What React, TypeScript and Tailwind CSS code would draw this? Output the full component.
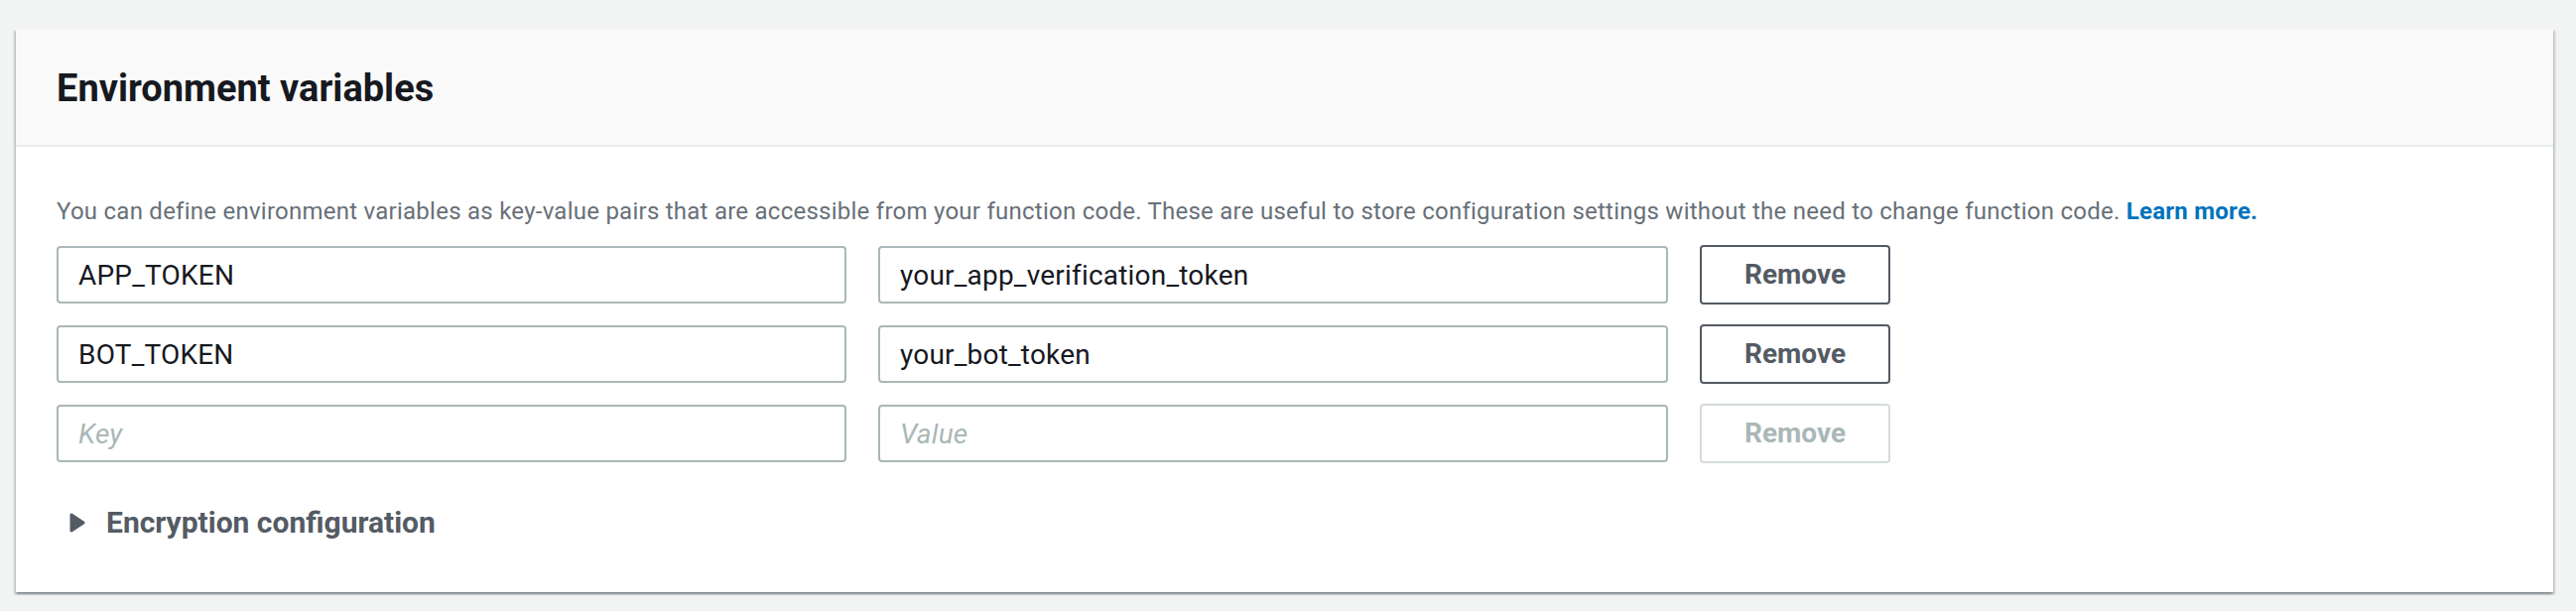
import React from "react";

const rows = [
  { key: "APP_TOKEN", value: "your_app_verification_token" },
  { key: "BOT_TOKEN", value: "your_bot_token" },
  { key: "", value: "" },
];

export default function App() {
  return (
    <div className="h-[616px] w-[2596px] bg-[#f2f3f3] pl-[16px] pr-[23px] pt-[29px] font-['Roboto',sans-serif]">
      <section className="h-[568px] bg-white shadow-[0_2px_2px_0_rgba(0,28,36,0.3),2px_2px_2px_0_rgba(0,28,36,0.15),-2px_2px_2px_0_rgba(0,28,36,0.15)]">
        <header className="flex h-[119px] items-center border-b-2 border-[#eaeded] bg-[#fafafa] px-[41px]">
          <h2 className="pt-[2px] text-[38px] font-bold leading-[44px] text-[#16191f]">Environment variables</h2>
        </header>

        <div className="px-[41px] pt-[49px]">
          <p className="text-[24px] leading-[32px] tracking-[0.25px] text-[#687078]">
            You can define environment variables as key-value pairs that are accessible from your function code. These
            are useful to store configuration settings without the need to change function code.{" "}
            <a className="font-bold text-[#0073bb]">Learn more.</a>
          </p>

          <div className="mt-[19px] flex flex-col gap-[22px]">
            {rows.map((row, i) => {
              const empty = row.key === "";
              return (
                <div key={i} className="flex h-[58px] items-center gap-[32px]">
                  <input
                    readOnly
                    value={row.key}
                    placeholder="Key"
                    className="h-[58px] w-[796px] rounded-[4px] border-2 border-[#aab7b8] bg-white px-[20px] font-['Roboto',sans-serif] text-[28px] tracking-[0.2px] text-[#16191f] outline-none placeholder:italic placeholder:text-[#aab7b8]"
                  />
                  <input
                    readOnly
                    value={row.value}
                    placeholder="Value"
                    className="h-[58px] w-[796px] rounded-[4px] border-2 border-[#aab7b8] bg-white px-[20px] font-['Roboto',sans-serif] text-[28px] tracking-[0.2px] text-[#16191f] outline-none placeholder:italic placeholder:text-[#aab7b8]"
                  />
                  <button
                    disabled={empty}
                    className={
                      empty
                        ? "h-[60px] w-[192px] shrink-0 rounded-[4px] border-2 border-[#d5dbdb] bg-white text-[28px] font-bold text-[#aab7b8]"
                        : "h-[60px] w-[192px] shrink-0 rounded-[4px] border-2 border-[#545b64] bg-white text-[28px] font-bold text-[#545b64]"
                    }
                  >
                    Remove
                  </button>
                </div>
              );
            })}
          </div>

          <div className="mt-[43px] flex items-center gap-[21px] pl-[13px]">
            <svg width="16" height="20" viewBox="0 0 16 20" className="shrink-0">
              <polygon points="2,2 14,10 2,18" fill="#545b64" stroke="#545b64" strokeWidth="3" strokeLinejoin="round" />
            </svg>
            <span className="text-[30px] font-bold leading-[36px] text-[#545b64]">Encryption configuration</span>
          </div>
        </div>
      </section>
    </div>
  );
}
